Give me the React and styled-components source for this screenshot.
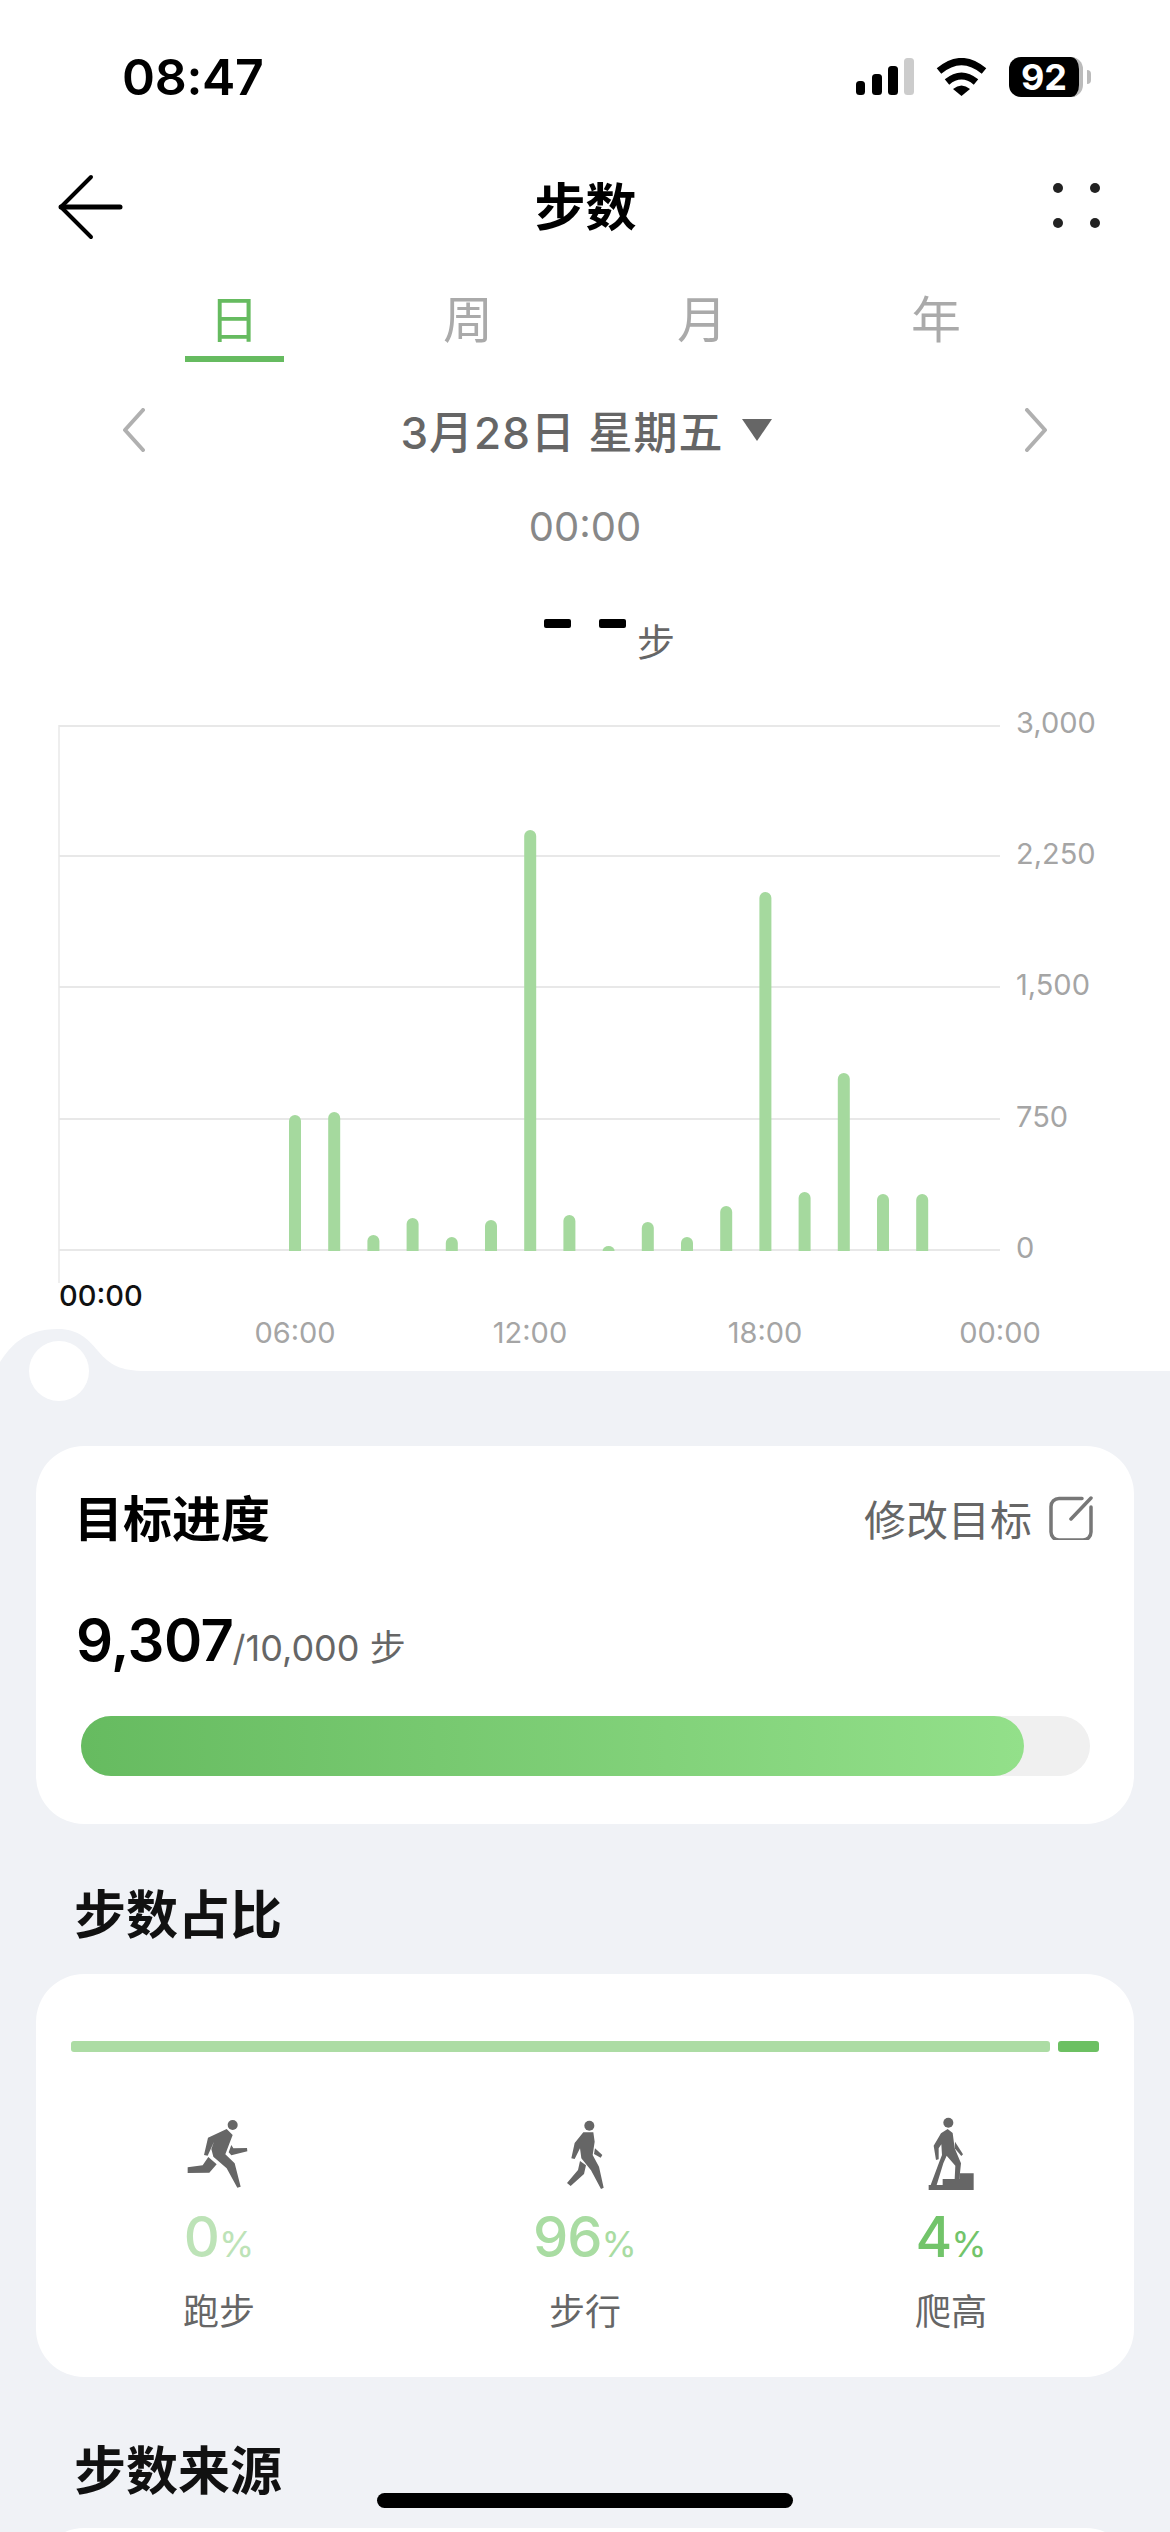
import React from 'react';
import styled, { createGlobalStyle } from 'styled-components';

const GlobalStyle = createGlobalStyle`
  html, body {
    margin: 0;
    padding: 0;
    background: #fff;
  }
  * {
    box-sizing: border-box;
  }
`;

const Page = styled.div`
  position: relative;
  width: 1170px;
  height: 2532px;
  overflow: hidden;
  background: #fff;
  font-family: Inter, "Noto Sans CJK SC", sans-serif;
  color: #000;
`;

const StatusBar = styled.div`
  height: 154px;
  display: flex;
  align-items: center;
  justify-content: space-between;
  padding: 0 79px 0 122px;
`;

const Clock = styled.div`
  font-size: 50px;
  font-weight: 600;
  letter-spacing: -0.3px;
`;

const StatusIcons = styled.div`
  display: flex;
  align-items: center;
  gap: 22px;
`;

const Battery = styled.div`
  position: relative;
  width: 74px;
  height: 40px;
  border-radius: 12px;
  background: #000;
  border-right: 4px solid #bbb;
  margin-right: 8px;
  display: flex;
  align-items: center;
  justify-content: center;
  color: #fff;
  font-size: 36px;
  font-weight: 700;

  &::after {
    content: '';
    position: absolute;
    right: -12px;
    top: 13px;
    width: 4px;
    height: 14px;
    border-radius: 0 4px 4px 0;
    background: #bbb;
  }
`;

const NavBar = styled.div`
  height: 106px;
  display: flex;
  align-items: center;
  justify-content: space-between;
  padding: 0 70px 0 58px;
`;

const NavTitle = styled.div`
  margin: 0 0 6px -6px;
  font-size: 51px;
  font-weight: 700;
`;

const Dots = styled.div`
  display: grid;
  grid-template-columns: 10px 10px;
  column-gap: 27px;
  row-gap: 25px;
  margin-bottom: 3px;

  span {
    width: 10px;
    height: 10px;
    border-radius: 50%;
    background: #222;
  }
`;

const Tabs = styled.div`
  height: 102px;
  display: grid;
  grid-template-columns: repeat(4, 234px);
  padding-left: 117px;
`;

const Tab = styled.div`
  display: flex;
  flex-direction: column;
  align-items: center;
  justify-content: flex-end;
  font-size: 50px;
  line-height: 72px;
  color: ${(p) => (p.$active ? '#66bb60' : '#aaa')};

  &::after {
    content: '';
    width: 99px;
    height: 6px;
    background: ${(p) => (p.$active ? '#66bb60' : 'transparent')};
  }
`;

const DateRow = styled.div`
  height: 136px;
  display: flex;
  align-items: center;
  justify-content: space-between;
  padding: 0 122px;
`;

const DateLabel = styled.div`
  display: flex;
  align-items: center;
  gap: 18px;
  margin-left: 2px;
  font-size: 44px;
  font-weight: 500;
  letter-spacing: 1px;
  color: #666;
`;

const Triangle = styled.div`
  width: 0;
  height: 0;
  border-left: 15px solid transparent;
  border-right: 15px solid transparent;
  border-top: 22px solid #666;
`;

const TimeRow = styled.div`
  height: 58px;
  line-height: 58px;
  text-align: center;
  font-size: 40px;
  color: #888;
`;

const ValueRow = styled.div`
  height: 144px;
  display: grid;
  grid-template-columns: 1fr 82px 1fr;
`;

const Dashes = styled.div`
  grid-column: 2;
  display: flex;
  justify-content: space-between;
  padding-top: 63px;

  span {
    width: 27px;
    height: 9px;
    border-radius: 2px;
    background: #000;
  }
`;

const ValueUnit = styled.div`
  padding: 59px 0 0 11px;
  font-size: 38px;
  line-height: 54px;
  color: #666;
`;

const ChartSvg = styled.svg`
  display: block;
  width: 1170px;
  height: 671px;
`;

const AxisText = styled.text`
  font-family: Inter, sans-serif;
  font-size: 29px;
  fill: ${(p) => p.$color || '#a5a5a5'};
  font-weight: ${(p) => p.$weight || 400};
`;

const GreySection = styled.div`
  position: relative;
  height: 1161px;
  padding: 75px 36px 0;
  background: #f0f2f6;
`;

const Bump = styled.svg`
  position: absolute;
  left: 0;
  top: -42px;
  width: 146px;
  height: 43px;
`;

const BumpHole = styled.div`
  position: absolute;
  left: 29px;
  top: -30px;
  width: 60px;
  height: 60px;
  border-radius: 50%;
  background: #fff;
`;

const Card = styled.div`
  background: #fff;
  border-radius: 48px;
`;

const GoalCard = styled(Card)`
  height: 378px;
  padding: 48px 41px 0;
`;

const CardHead = styled.div`
  height: 48px;
  display: flex;
  align-items: center;
  justify-content: space-between;
`;

const CardTitle = styled.div`
  margin: 0 0 5px -3px;
  font-size: 49px;
  font-weight: 700;
`;

const EditLink = styled.div`
  display: flex;
  align-items: center;
  gap: 17px;
  font-size: 42px;
  color: #666;

  span {
    margin-bottom: 2px;
  }
`;

const Amount = styled.div`
  margin: 62px 0 0 -1px;
  height: 72px;
  line-height: 72px;
  color: #666;
  font-size: 36px;

  b {
    margin-right: -1px;
    font-size: 58px;
    font-weight: 600;
    letter-spacing: -0.5px;
    color: #000;
  }
`;

const Track = styled.div`
  margin: 40px 3px 0 4px;
  height: 60px;
  border-radius: 30px;
  background: #f0f0f0;
`;

const TrackFill = styled.div`
  height: 100%;
  border-radius: 30px;
  background: linear-gradient(90deg, #66bb60, #93e08a);
`;

const SectionTitle = styled.div`
  display: flex;
  align-items: center;
  height: ${(p) => p.$height}px;
  padding: ${(p) => p.$top}px 0 0 38px;
  font-size: 52px;
  font-weight: 700;
  color: #111;
`;

const ShareCard = styled(Card)`
  height: 403px;
  padding-top: 67px;
`;

const ShareBar = styled.div`
  display: flex;
  gap: 8px;
  margin: 0 35px;
`;

const ShareSegment = styled.div`
  flex: ${(p) => p.$grow};
  height: 11px;
  border-radius: 3px;
  background: ${(p) => p.$color};
`;

const StatGrid = styled.div`
  display: grid;
  grid-template-columns: repeat(3, 1fr);
  margin-top: 53px;
`;

const Stat = styled.div`
  display: flex;
  flex-direction: column;
  align-items: center;
`;

const StatIcon = styled.svg`
  width: 90px;
  height: 90px;
  fill: #666;
`;

const StatValue = styled.div`
  margin-top: 7px;
  line-height: 70px;
  font-size: 36px;
  color: ${(p) => p.$color};

  b {
    font-size: 56px;
    font-weight: 500;
    letter-spacing: -1px;
  }
`;

const StatLabel = styled.div`
  margin-top: 8px;
  line-height: 50px;
  font-size: 36px;
  color: #666;
`;

const SourceCard = styled(Card)`
  height: 120px;
`;

const HomeIndicator = styled.div`
  position: absolute;
  left: 377px;
  bottom: 24px;
  width: 416px;
  height: 15px;
  border-radius: 8px;
  background: #000;
`;

const gridLines = [
  { y: 726, label: '3,000', base: 733 },
  { y: 856, label: '2,250', base: 864 },
  { y: 987, label: '1,500', base: 995 },
  { y: 1119, label: '750', base: 1127 },
  { y: 1250, label: '0', base: 1258 },
];

// px above the baseline, one bar per hour from 06:00
const barHeights = [135, 138, 15, 32, 13, 30, 420, 35, 4, 28, 13, 44, 358, 58, 177, 56, 56];

const timeLabels = [
  { x: 295, label: '06:00' },
  { x: 530, label: '12:00' },
  { x: 765, label: '18:00' },
  { x: 1000, label: '00:00' },
];

const StepsChart = () => (
  <ChartSvg viewBox="0 700 1170 671">
    <line x1="59" y1="725" x2="59" y2="1283" stroke="#eee" strokeWidth="2" />
    {gridLines.map((g) => (
      <g key={g.label}>
        <line x1="59" y1={g.y} x2="1000" y2={g.y} stroke="#e8e8e8" strokeWidth="2" />
        <AxisText x="1016" y={g.base}>{g.label}</AxisText>
      </g>
    ))}
    {barHeights.map((h, i) => {
      const x = 295 + i * 39.2;
      const top = 1250 - h;
      const d = h < 6
        ? `M${x - 6} 1251 A6 ${h + 1} 0 0 1 ${x + 6} 1251 Z`
        : `M${x - 6} 1251 V${top + 6} A6 6 0 0 1 ${x + 6} ${top + 6} V1251 Z`;
      return <path key={i} d={d} fill="#a5d99e" />;
    })}
    <AxisText x="59" y="1306" $color="#111" $weight="500">00:00</AxisText>
    {timeLabels.map((t) => (
      <AxisText key={t.x} x={t.x} y="1343" textAnchor="middle">{t.label}</AxisText>
    ))}
  </ChartSvg>
);

const RunIcon = () => (
  <StatIcon viewBox="0 0 270 270">
    <circle cx="176" cy="60" r="15" />
    <path d="M90 150 L102 98 L158 72 L176 90 L154 148 L182 175 L200 245 L190 248 L158 190 L118 155 L112 132 L120 110 L101 152 Z" />
    <path d="M172 120 L178 130 L219 129 L220 139 L172 151 L164 142 Z" />
    <path d="M41 187 L86 181 L103 156 L128 178 L106 203 L41 204 Z" />
  </StatIcon>
);

const WalkIcon = () => (
  <StatIcon viewBox="0 0 270 270">
    <circle cx="148" cy="62" r="15" />
    <path d="M94 160 L104 114 L130 82 L160 82 L164 110 L158 150 L177 185 L191 248 L183 252 L153 196 L124 160 L120 130 L104 162 Z" />
    <path d="M165 130 L187 150 L182 158 L162 147 Z" />
    <path d="M120 168 L138 181 L132 207 L92 243 L81 234 L114 195 Z" />
  </StatIcon>
);

const ClimbIcon = () => (
  <StatIcon viewBox="0 0 270 270">
    <circle cx="127" cy="53" r="15" />
    <path d="M90 165 L83 122 L105 85 L125 72 L140 84 L146 130 L165 175 L160 222 L146 222 L148 182 L122 152 L112 175 L92 240 L74 240 L100 170 L108 150 L106 118 L98 130 L98 163 Z" />
    <path d="M147 110 L171 148 L166 153 L146 130 Z" />
    <path d="M68 240 H110 V222 H160 V205 H203 V255 H68 Z" />
  </StatIcon>
);

const stats = [
  { name: '跑步', value: '0', color: '#bde3b7', Icon: RunIcon },
  { name: '步行', value: '96', color: '#a9dca2', Icon: WalkIcon },
  { name: '爬高', value: '4', color: '#72c46a', Icon: ClimbIcon },
];

const App = () => (
  <Page>
    <GlobalStyle />
    <StatusBar>
      <Clock>08:47</Clock>
      <StatusIcons>
        <svg width="58" height="38" viewBox="0 0 58 38">
          <rect x="0" y="23" width="9" height="14" rx="3.5" fill="#000" />
          <rect x="16" y="16" width="10" height="21" rx="3.5" fill="#000" />
          <rect x="32" y="8" width="10" height="29" rx="3.5" fill="#000" />
          <rect x="48" y="0" width="10" height="37" rx="3.5" fill="#ccc" />
        </svg>
        <svg width="51" height="38" viewBox="0 0 51 38">
          <path d="M3 13 Q25.5 -6 48 13" fill="none" stroke="#000" strokeWidth="7" />
          <path d="M11 24 Q25.5 12 40 24" fill="none" stroke="#000" strokeWidth="7" />
          <path d="M17 31 Q25.5 24 34 31 L25.5 38 Z" fill="#000" />
        </svg>
        <Battery>92</Battery>
      </StatusIcons>
    </StatusBar>

    <NavBar>
      <svg width="66" height="66" viewBox="0 0 66 66">
        <path d="M33 3 L3 33 L33 63" fill="none" stroke="#000" strokeWidth="4" strokeLinecap="round" strokeLinejoin="round" />
        <path d="M3 33 H62" fill="none" stroke="#000" strokeWidth="5" strokeLinecap="round" />
      </svg>
      <NavTitle>步数</NavTitle>
      <Dots><span /><span /><span /><span /></Dots>
    </NavBar>

    <Tabs>
      <Tab $active>日</Tab>
      <Tab>周</Tab>
      <Tab>月</Tab>
      <Tab>年</Tab>
    </Tabs>

    <DateRow>
      <svg width="24" height="44" viewBox="0 0 24 44">
        <path d="M21 2 L3 22 L21 42" fill="none" stroke="#b0b0b0" strokeWidth="4" strokeLinecap="round" strokeLinejoin="round" />
      </svg>
      <DateLabel>
        3月28日 星期五
        <Triangle />
      </DateLabel>
      <svg width="24" height="44" viewBox="0 0 24 44">
        <path d="M3 2 L21 22 L3 42" fill="none" stroke="#b0b0b0" strokeWidth="4" strokeLinecap="round" strokeLinejoin="round" />
      </svg>
    </DateRow>

    <TimeRow>00:00</TimeRow>

    <ValueRow>
      <Dashes><span /><span /></Dashes>
      <ValueUnit>步</ValueUnit>
    </ValueRow>

    <StepsChart />

    <GreySection>
      <Bump viewBox="0 0 146 43">
        <path d="M0 33 C10 18 24 0 58 0 C78 0 88 10 98 22 C110 36 120 42 146 42 V43 H0 Z" fill="#f0f2f6" />
      </Bump>
      <BumpHole />

      <GoalCard>
        <CardHead>
          <CardTitle>目标进度</CardTitle>
          <EditLink>
            <span>修改目标</span>
            <svg width="44" height="44" viewBox="19 15 44 44">
              <path d="M52 17.5 H29 a8 8 0 0 0 -8 8 V51 a8 8 0 0 0 8 8 H53 a8 8 0 0 0 8 -8 V26 M41 38 L61 17" fill="none" stroke="#777" strokeWidth="3.5" strokeLinecap="round" />
            </svg>
          </EditLink>
        </CardHead>
        <Amount><b>9,307</b>/10,000 步</Amount>
        <Track>
          <TrackFill style={{ width: `${(943 / 1009) * 100}%` }} />
        </Track>
      </GoalCard>

      <SectionTitle $height={150} $top={24}>步数占比</SectionTitle>

      <ShareCard>
        <ShareBar>
          <ShareSegment $grow={978} $color="#acdca4" />
          <ShareSegment $grow={41} $color="#6cc062" />
        </ShareBar>
        <StatGrid>
          {stats.map(({ name, value, color, Icon }) => (
            <Stat key={name}>
              <Icon />
              <StatValue $color={color}><b>{value}</b>%</StatValue>
              <StatLabel>{name}</StatLabel>
            </Stat>
          ))}
        </StatGrid>
      </ShareCard>

      <SectionTitle $height={151} $top={29}>步数来源</SectionTitle>
      <SourceCard />
    </GreySection>

    <HomeIndicator />
  </Page>
);

export default App;
